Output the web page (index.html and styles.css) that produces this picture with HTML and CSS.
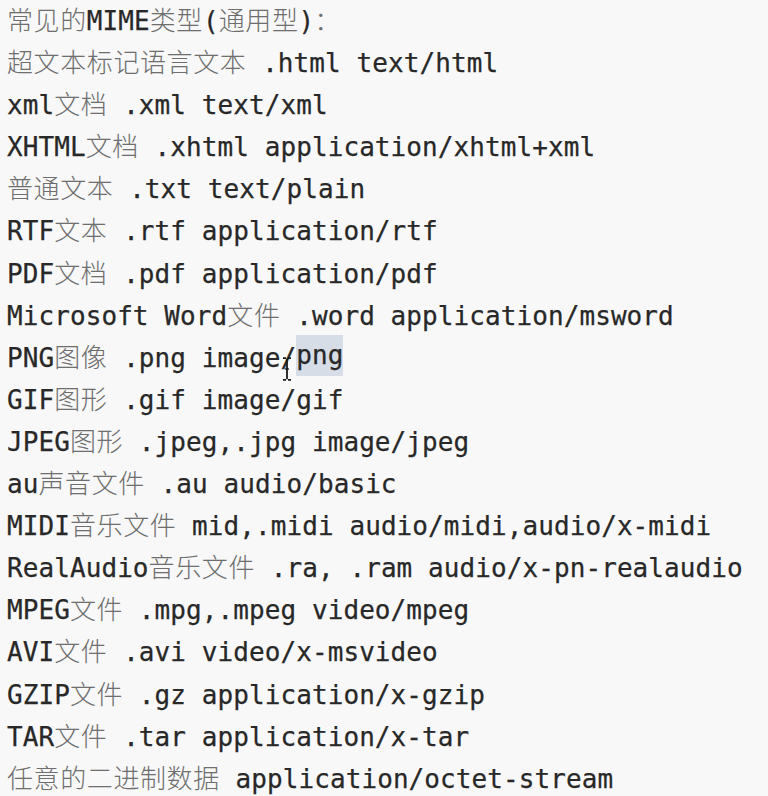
FILE: index.html
```html
<!DOCTYPE html>
<html lang="zh-CN">
<head>
<meta charset="utf-8">
<title>MIME</title>
<link rel="stylesheet" href="styles.css">
</head>
<body>
<div class="list">
  <div class="line"><span class="zh">常见的</span>MIME<span class="zh">类型</span>(<span class="zh">通用型</span>)<span class="zh">：</span></div>
  <div class="line"><span class="zh">超文本标记语言文本</span> .html text/html</div>
  <div class="line">xml<span class="zh">文档</span> .xml text/xml</div>
  <div class="line">XHTML<span class="zh">文档</span> .xhtml application/xhtml+xml</div>
  <div class="line"><span class="zh">普通文本</span> .txt text/plain</div>
  <div class="line">RTF<span class="zh">文本</span> .rtf application/rtf</div>
  <div class="line">PDF<span class="zh">文档</span> .pdf application/pdf</div>
  <div class="line">Microsoft Word<span class="zh">文件</span> .word application/msword</div>
  <div class="line">PNG<span class="zh">图像</span> .png image<span class="cursor-wrap">/<svg class="ibeam" width="10" height="24" viewBox="0 0 10 24"><path d="M1 1.2h3M6 1.2h3M5 1.8v20.4M1 22.8h3M6 22.8h3" stroke="#1a1a1a" stroke-width="1.8" fill="none"/><path d="M3 12h4" stroke="#1a1a1a" stroke-width="1.3"/></svg></span><span class="sel">png</span></div>
  <div class="line">GIF<span class="zh">图形</span> .gif image/gif</div>
  <div class="line">JPEG<span class="zh">图形</span> .jpeg,.jpg image/jpeg</div>
  <div class="line">au<span class="zh">声音文件</span> .au audio/basic</div>
  <div class="line">MIDI<span class="zh">音乐文件</span> mid,.midi audio/midi,audio/x-midi</div>
  <div class="line">RealAudio<span class="zh">音乐文件</span> .ra, .ram audio/x-pn-realaudio</div>
  <div class="line">MPEG<span class="zh">文件</span> .mpg,.mpeg video/mpeg</div>
  <div class="line">AVI<span class="zh">文件</span> .avi video/x-msvideo</div>
  <div class="line">GZIP<span class="zh">文件</span> .gz application/x-gzip</div>
  <div class="line">TAR<span class="zh">文件</span> .tar application/x-tar</div>
  <div class="line"><span class="zh">任意的二进制数据</span> application/octet-stream</div>
</div>
</body>
</html>
```

FILE: styles.css
```css
html, body {
  margin: 0;
  padding: 0;
  background: #f8f8f8;
}

.list {
  margin-top: -2px;
  padding: 0 0 0 7px;
  font-family: "DejaVu Sans Mono", "Liberation Mono", "Noto Sans CJK SC", monospace;
  font-size: 26px;
  letter-spacing: 0.08px;
  color: #282828;
  -webkit-text-stroke: 0.25px #282828;
}

.line {
  height: 42.1px;
  line-height: 42.1px;
  white-space: pre;
}

.zh {
  font-family: "Noto Sans CJK SC", sans-serif;
  font-weight: 300;
  letter-spacing: 0.6px;
  color: #6e6e6e;
  -webkit-text-stroke: 0;
}

.sel {
  display: inline-block;
  background: #d6dde6;
  line-height: 41px;
  height: 41px;
  vertical-align: top;
  margin-top: 0.5px;
}

.cursor-wrap {
  position: relative;
}

.ibeam {
  position: absolute;
  left: 2px;
  top: 14px;
}
```
